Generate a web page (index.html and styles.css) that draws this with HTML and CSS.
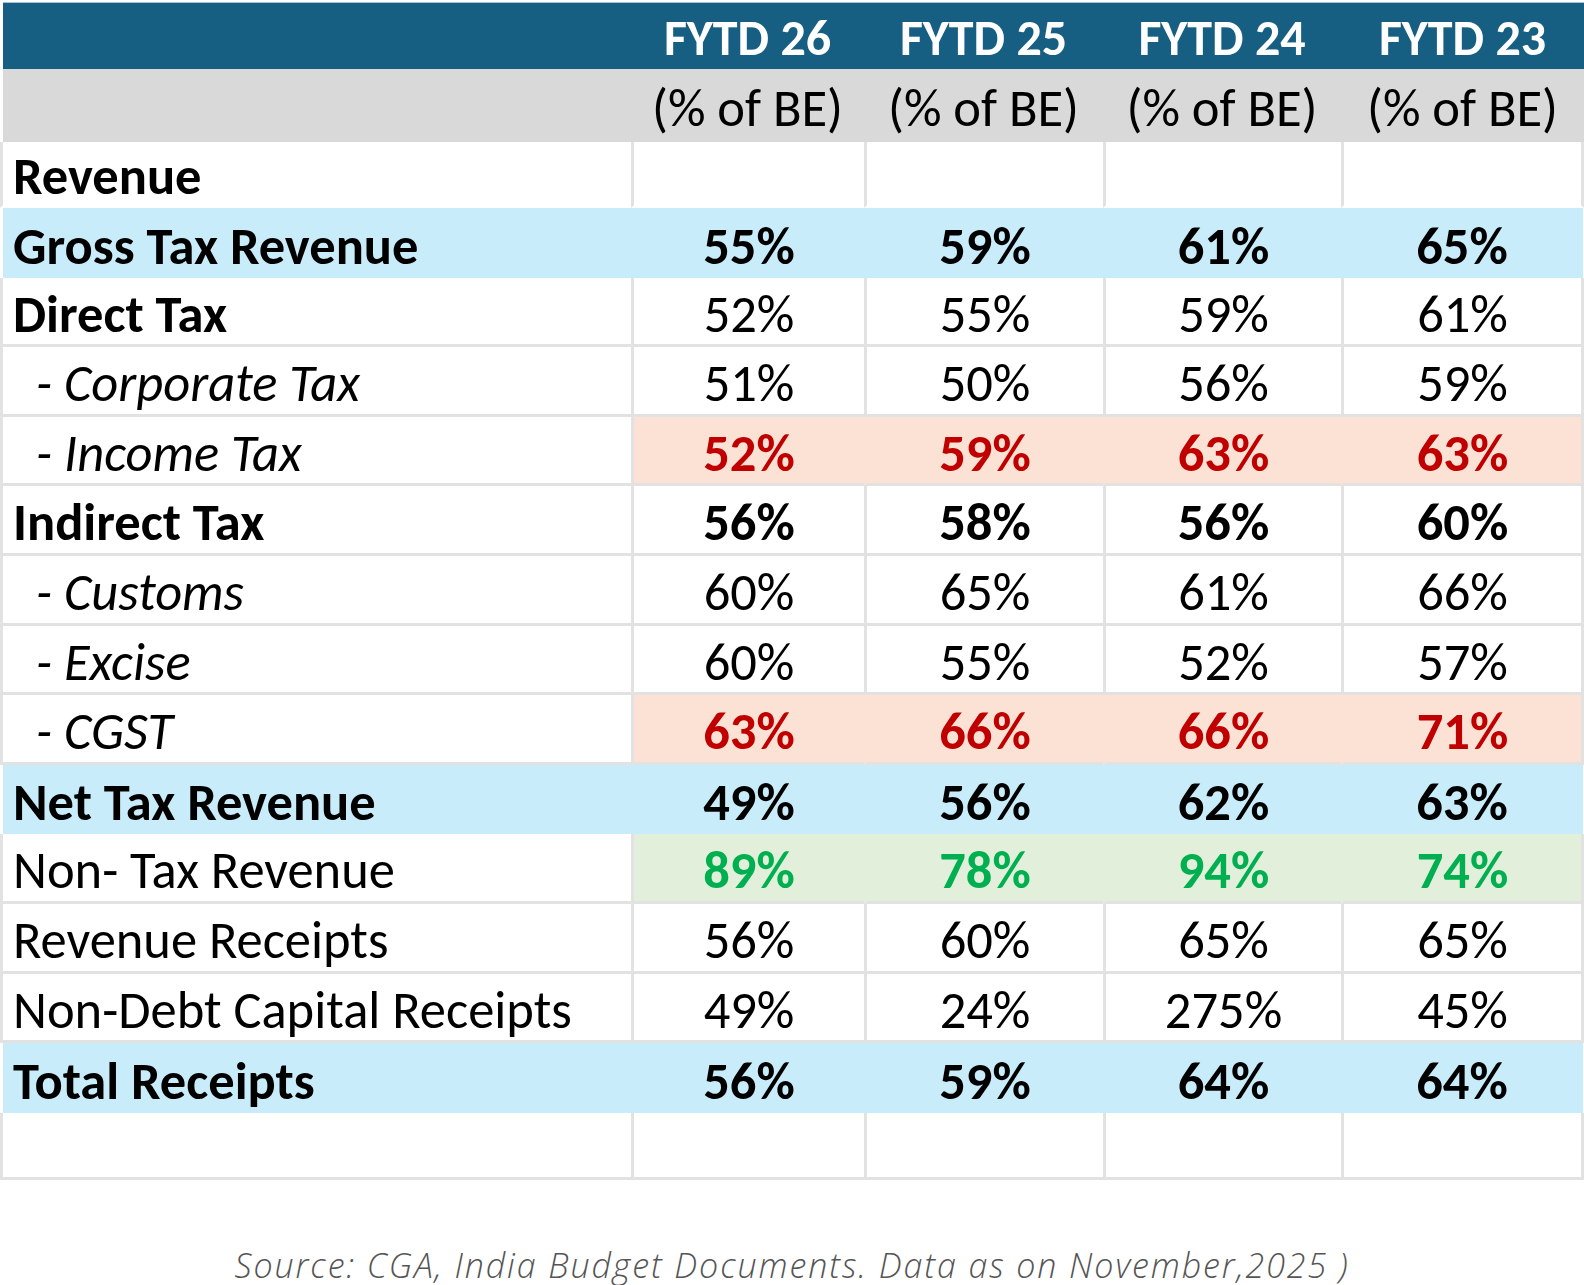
FILE: index.html
```html
<!DOCTYPE html>
<html lang="en">
<head>
<meta charset="utf-8">
<title>FYTD Receipts (% of BE)</title>
<link rel="stylesheet" href="styles.css">
</head>
<body>
<div class="sheet">
  <div class="table">
    <div class="row head-top">
      <div class="cell label"></div>
      <div class="cell num">FYTD 26</div>
      <div class="cell num">FYTD 25</div>
      <div class="cell num">FYTD 24</div>
      <div class="cell num">FYTD 23</div>
    </div>
    <div class="row head-sub">
      <div class="cell label"></div>
      <div class="cell num">(% of BE)</div>
      <div class="cell num">(% of BE)</div>
      <div class="cell num">(% of BE)</div>
      <div class="cell num">(% of BE)</div>
    </div>
    <div class="row plain first">
      <div class="cell label bold">Revenue</div>
      <div class="cell num"></div>
      <div class="cell num"></div>
      <div class="cell num"></div>
      <div class="cell num last"></div>
    </div>
    <div class="row blue">
      <div class="cell label bold">Gross Tax Revenue</div>
      <div class="cell num bold">55%</div>
      <div class="cell num bold">59%</div>
      <div class="cell num bold">61%</div>
      <div class="cell num bold">65%</div>
    </div>
    <div class="row plain">
      <div class="cell label bold">Direct Tax</div>
      <div class="cell num">52%</div>
      <div class="cell num">55%</div>
      <div class="cell num">59%</div>
      <div class="cell num last">61%</div>
    </div>
    <div class="row plain">
      <div class="cell label sub">- Corporate Tax</div>
      <div class="cell num">51%</div>
      <div class="cell num">50%</div>
      <div class="cell num">56%</div>
      <div class="cell num last">59%</div>
    </div>
    <div class="row plain">
      <div class="cell label sub">- Income Tax</div>
      <div class="cell num bold red pink first-shade">52%</div>
      <div class="cell num bold red pink">59%</div>
      <div class="cell num bold red pink">63%</div>
      <div class="cell num bold red pink last">63%</div>
    </div>
    <div class="row plain">
      <div class="cell label bold">Indirect Tax</div>
      <div class="cell num bold">56%</div>
      <div class="cell num bold">58%</div>
      <div class="cell num bold">56%</div>
      <div class="cell num bold last">60%</div>
    </div>
    <div class="row plain">
      <div class="cell label sub">- Customs</div>
      <div class="cell num">60%</div>
      <div class="cell num">65%</div>
      <div class="cell num">61%</div>
      <div class="cell num last">66%</div>
    </div>
    <div class="row plain">
      <div class="cell label sub">- Excise</div>
      <div class="cell num">60%</div>
      <div class="cell num">55%</div>
      <div class="cell num">52%</div>
      <div class="cell num last">57%</div>
    </div>
    <div class="row plain">
      <div class="cell label sub">- CGST</div>
      <div class="cell num bold red pink first-shade">63%</div>
      <div class="cell num bold red pink">66%</div>
      <div class="cell num bold red pink">66%</div>
      <div class="cell num bold red pink last">71%</div>
    </div>
    <div class="row blue">
      <div class="cell label bold">Net Tax Revenue</div>
      <div class="cell num bold">49%</div>
      <div class="cell num bold">56%</div>
      <div class="cell num bold">62%</div>
      <div class="cell num bold">63%</div>
    </div>
    <div class="row plain">
      <div class="cell label">Non- Tax Revenue</div>
      <div class="cell num bold green mint first-shade">89%</div>
      <div class="cell num bold green mint">78%</div>
      <div class="cell num bold green mint">94%</div>
      <div class="cell num bold green mint last">74%</div>
    </div>
    <div class="row plain">
      <div class="cell label">Revenue Receipts</div>
      <div class="cell num">56%</div>
      <div class="cell num">60%</div>
      <div class="cell num">65%</div>
      <div class="cell num last">65%</div>
    </div>
    <div class="row plain">
      <div class="cell label">Non-Debt Capital Receipts</div>
      <div class="cell num">49%</div>
      <div class="cell num">24%</div>
      <div class="cell num">275%</div>
      <div class="cell num last">45%</div>
    </div>
    <div class="row blue">
      <div class="cell label bold">Total Receipts</div>
      <div class="cell num bold">56%</div>
      <div class="cell num bold">59%</div>
      <div class="cell num bold">64%</div>
      <div class="cell num bold">64%</div>
    </div>
    <div class="row plain empty">
      <div class="cell label"></div>
      <div class="cell num"></div>
      <div class="cell num"></div>
      <div class="cell num"></div>
      <div class="cell num last"></div>
    </div>
  </div>
  <p class="source">Source: CGA, India Budget Documents. Data as on November,2025 )</p>
</div>
</body>
</html>
```

FILE: styles.css
```css
html, body {
  margin: 0;
  padding: 0;
  background: #ffffff;
}

body {
  font-family: Carlito, Lato, "Noto Sans", sans-serif;
  color: #000000;
}

.sheet {
  width: 1584px;
  padding-top: 2px;
}

.table {
  display: flex;
  flex-direction: column;
}

.row {
  display: grid;
  grid-template-columns: 631px 233px 239px 238px 243px;
  box-sizing: border-box;
  height: 69.6px;
}

.cell {
  box-sizing: border-box;
  display: flex;
  align-items: center;
  font-size: 52.5px;
  line-height: 1;
  white-space: nowrap;
  padding-top: 6px;
}

.num {
  justify-content: center;
}

.label {
  padding-left: 10px;
}

.bold { font-weight: 700; }

.sub {
  font-style: italic;
  padding-left: 33px;
}

/* header */
.head-top {
  background: #175f82;
  border-top: 1px solid #a9c3d0;
  margin-left: 3px;
  height: 67px;
  grid-template-columns: 628px 233px 239px 238px 243px;
}
.head-top .cell {
  color: #ffffff;
  font-weight: 700;
  font-size: 50px;
  padding-top: 4px;
}
.head-sub {
  background: #d9d9d9;
  margin-left: 3px;
  height: 73px;
  grid-template-columns: 628px 233px 239px 238px 243px;
}
.head-sub .cell {
  padding-top: 6px;
}

/* plain rows with gridlines */
.plain .cell {
  border-left: 3px solid #e2e2e2;
  border-bottom: 3px solid #e2e2e2;
}
.plain .cell.last {
  border-right: 3px solid #e2e2e2;
}
.plain.first {
  height: 66px;
}
.plain.first .cell {
  border-bottom-color: transparent;
}
.plain.empty {
  height: 67px;
}

/* shaded value cells */
.pink { background: #fbe2d5; }
.mint { background: #e2efda; }
.plain .pink:not(.first-shade),
.plain .mint:not(.first-shade) {
  border-left-color: transparent;
}
.red { color: #c00000; }
.green { color: #00b050; }

/* highlighted rows */
.blue {
  background: #c9ecfa;
  margin-left: 3px;
  margin-right: 1px;
  grid-template-columns: 628px 233px 239px 238px 239px;
}
.blue .cell {
  border-left: 3px solid transparent;
}
.blue .cell.label {
  border-left: 0;
}

.source {
  margin: 62px 0 0;
  text-align: center;
  font-family: "Open Sans", "Noto Sans", sans-serif;
  font-style: italic;
  font-weight: 300;
  font-size: 34px;
  letter-spacing: 1.9px;
  color: #555555;
}
```
